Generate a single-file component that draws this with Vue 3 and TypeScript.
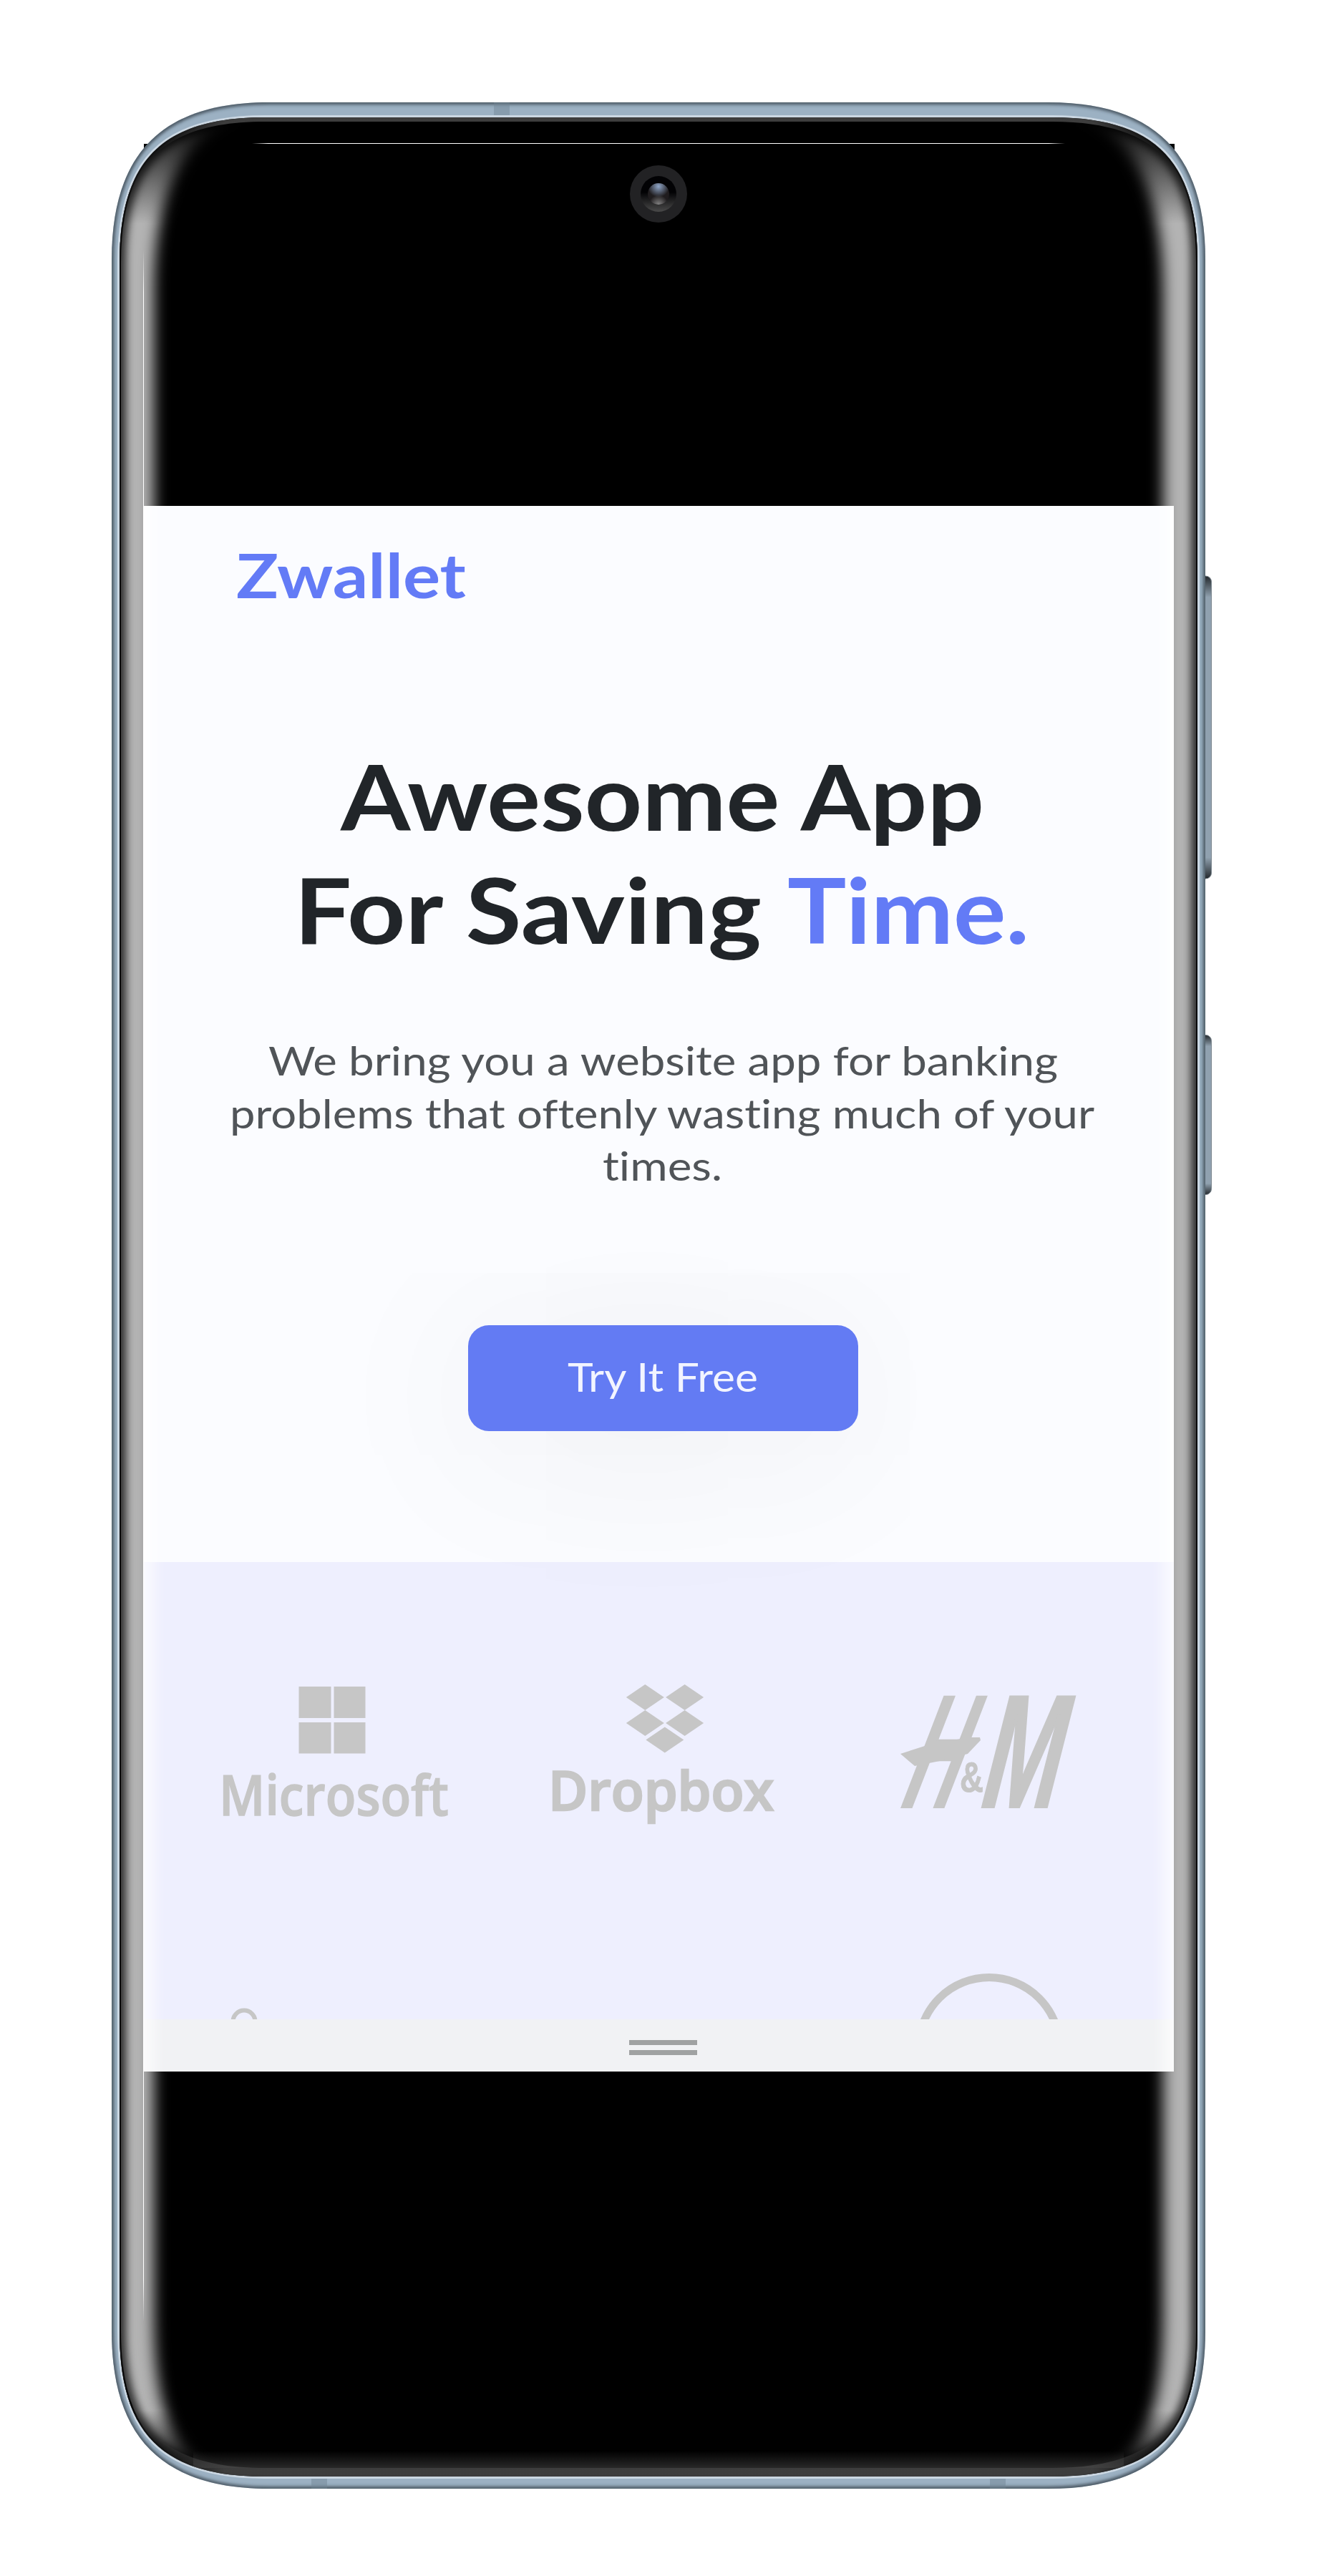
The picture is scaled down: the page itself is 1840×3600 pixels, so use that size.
<script setup lang="ts">
interface Line {
  text: string
  x: number
  y: number
  width: number
}

const intro: Line[] = [
  { text: 'We bring you a website app for banking', x: 174, y: 105, width: 1103 },
  { text: 'problems that oftenly wasting much of your', x: 120, y: 179, width: 1208 },
  { text: 'times.', x: 641, y: 252, width: 167 },
]

const outerEdge =
  'M376 143H1464C1613 143 1684 214 1684 363V3258C1684 3407 1613 3478 1464 3478H376C227 3478 156 3407 156 3258V363C156 214 227 143 376 143Z'
const innerEdge =
  'M370 164H1470C1613 164 1673 224 1673 367V3258C1673 3401 1613 3461 1470 3461H370C227 3461 167 3401 167 3258V367C167 224 227 164 370 164Z'
const glow =
  'M100 100H1740V3540H100Z M400 150H1440C1575 150 1625 250 1625 410V3230C1625 3400 1590 3475 1440 3475H400C250 3475 215 3400 215 3230V410C215 250 265 150 400 150Z'
</script>

<template>
  <main class="stage">
    <svg class="layer" viewBox="0 0 1840 3600" aria-hidden="true">
      <defs>
        <clipPath id="outer-clip"><path :d="outerEdge" /></clipPath>
        <filter id="rim-blur" filterUnits="userSpaceOnUse" x="100" y="100" width="1640" height="3420">
          <feGaussianBlur stdDeviation="2.5" />
        </filter>
        <linearGradient id="key" x1="0" y1="0" x2="0" y2="1">
          <stop offset="0" stop-color="#23282c" />
          <stop offset=".07" stop-color="#90a1af" />
          <stop offset=".93" stop-color="#90a1af" />
          <stop offset="1" stop-color="#23282c" />
        </linearGradient>
      </defs>
      <path d="M201 201h16v16h-16zM1625 201h16v16h-16z" />
      <g fill="url(#key)" stroke="#7d8890" stroke-width="1">
        <rect x="1676" y="805" width="16.500" height="423" rx="8" />
        <rect x="1676" y="1446.500" width="16.500" height="223" rx="8" />
      </g>
      <path :d="outerEdge" fill="#9cb1c3" />
      <g clip-path="url(#outer-clip)">
        <path :d="outerEdge" fill="none" stroke="#35404a" stroke-width="5" filter="url(#rim-blur)" />
        <g fill="#6f8393" opacity=".45">
          <rect x="690" y="143" width="22" height="21" />
          <rect x="435" y="3461" width="22" height="17" />
          <rect x="1383" y="3461" width="22" height="17" />
        </g>
      </g>
      <path :d="innerEdge" fill="#000" stroke="#cbd7e2" stroke-width="6" />
      <path :d="innerEdge" fill="#000" />
    </svg>

    <section class="app">
      <header class="brand">
        <svg width="1439" height="190">
          <text x="129" y="129" textLength="321" lengthAdjust="spacingAndGlyphs">Zwallet</text>
        </svg>
      </header>

      <div class="hero">
        <h1>
          <svg width="1439" height="501">
            <text x="275" y="264" textLength="899" lengthAdjust="spacingAndGlyphs">Awesome App</text>
            <text x="210" y="422" textLength="653" lengthAdjust="spacingAndGlyphs">For Saving</text>
            <text class="accent" x="899" y="422" textLength="338" lengthAdjust="spacingAndGlyphs">Time.</text>
          </svg>
        </h1>
        <p>
          <svg width="1439" height="454">
            <text
              v-for="line in intro"
              :key="line.text"
              :x="line.x"
              :y="line.y"
              :textLength="line.width"
              lengthAdjust="spacingAndGlyphs"
            >{{ line.text }}</text>
          </svg>
        </p>
        <button type="button">
          <svg width="545" height="148">
            <text x="139" y="93" textLength="266" lengthAdjust="spacingAndGlyphs">Try It Free</text>
          </svg>
        </button>
      </div>

      <div class="partners">
        <div class="row">
          <svg class="logo microsoft" viewBox="300 2340 340 220" width="340" height="220">
            <path d="M417.500 2357h45v44h-45zM466.500 2357h44v44h-44zM417.500 2407h45v43.500h-45zM466.500 2407h44v43.500h-44z" />
            <text x="306" y="2537" font-size="77" font-weight="600" textLength="321" lengthAdjust="spacingAndGlyphs">Microsoft</text>
          </svg>
          <svg class="logo dropbox" viewBox="760 2340 340 220" width="340" height="220">
            <path d="M901.300 2354l26.500 18-26.500 18-26.500-18zM956.600 2354l26.500 18-26.500 18-26.500-18zM901.300 2390l26.500 18-26.500 18-26.500-18zM956.600 2390l26.500 18-26.500 18-26.500-18zM928.800 2413.500l26.500 18-26.500 18-26.500-18z" />
            <text x="766" y="2529.500" font-size="76" font-weight="600" textLength="315" lengthAdjust="spacingAndGlyphs">Dropbox</text>
          </svg>
          <svg class="logo hm" viewBox="1240 2340 280 220" width="280" height="220">
            <text transform="translate(1258 2525) skewX(-16.5)" font-size="223" textLength="73" lengthAdjust="spacingAndGlyphs">H</text>
            <path d="M1258 2451L1292 2440L1352 2428L1369 2428L1370 2432L1352 2451L1318 2460L1278 2468Z" />
            <text class="amp" x="1341" y="2504" font-size="60" textLength="33" lengthAdjust="spacingAndGlyphs">&amp;</text>
            <text transform="translate(1370 2525) skewX(-8)" font-size="223" textLength="108" lengthAdjust="spacingAndGlyphs">M</text>
          </svg>
        </div>
        <div class="row clipped">
          <svg width="50" height="70" viewBox="316 2751 50 70">
            <circle cx="341" cy="2824" r="15.500" fill="none" stroke="#c6c6c6" stroke-width="6" />
          </svg>
          <svg width="220" height="70" viewBox="1273 2751 220 70">
            <circle cx="1382" cy="2861" r="98.500" fill="none" stroke="#c6c6c6" stroke-width="11" />
          </svg>
        </div>
      </div>

      <footer class="grip">
        <span></span>
        <span></span>
      </footer>
    </section>

    <svg class="layer" viewBox="0 0 1840 3600" aria-hidden="true">
      <defs>
        <clipPath id="inner-clip"><path :d="innerEdge" /></clipPath>
        <filter id="glow-blur" filterUnits="userSpaceOnUse" x="50" y="50" width="1740" height="3540">
          <feGaussianBlur stdDeviation="10" />
        </filter>
        <filter id="edge-blur" filterUnits="userSpaceOnUse" x="50" y="50" width="1740" height="3540">
          <feGaussianBlur stdDeviation="6" />
        </filter>
        <linearGradient id="fade" x1="0" y1="164" x2="0" y2="3461" gradientUnits="userSpaceOnUse">
          <stop offset="0" stop-color="#000" />
          <stop offset=".015" stop-color="#555" />
          <stop offset=".045" stop-color="#fff" />
          <stop offset=".972" stop-color="#fff" />
          <stop offset=".99" stop-color="#444" />
          <stop offset="1" stop-color="#000" />
        </linearGradient>
        <mask id="side-mask" maskUnits="userSpaceOnUse" x="0" y="0" width="1840" height="3600">
          <rect width="1840" height="3600" fill="url(#fade)" />
        </mask>
        <linearGradient id="chin" x1="0" y1="3425" x2="0" y2="3449" gradientUnits="userSpaceOnUse">
          <stop offset="0" stop-color="#fff" stop-opacity="0" />
          <stop offset="1" stop-color="#fff" stop-opacity=".16" />
        </linearGradient>
        <linearGradient id="band" x1="215" y1="0" x2="1625" y2="0" gradientUnits="userSpaceOnUse">
          <stop offset="0" stop-color="#444" stop-opacity="0" />
          <stop offset=".07" stop-color="#444" stop-opacity=".9" />
          <stop offset=".93" stop-color="#444" stop-opacity=".9" />
          <stop offset="1" stop-color="#444" stop-opacity="0" />
        </linearGradient>
        <linearGradient id="hairline-x" x1="352" y1="0" x2="1488" y2="0" gradientUnits="userSpaceOnUse">
          <stop offset="0" stop-color="#fff" stop-opacity="0" />
          <stop offset=".02" stop-color="#fff" />
          <stop offset=".98" stop-color="#fff" />
          <stop offset="1" stop-color="#fff" stop-opacity="0" />
        </linearGradient>
        <linearGradient id="hairline-y" x1="0" y1="350" x2="0" y2="3244" gradientUnits="userSpaceOnUse">
          <stop offset="0" stop-color="#fff" stop-opacity="0" />
          <stop offset=".02" stop-color="#fff" />
          <stop offset=".98" stop-color="#fff" />
          <stop offset="1" stop-color="#fff" stop-opacity="0" />
        </linearGradient>
        <linearGradient id="socket" x1="0" y1="0" x2="0" y2="1">
          <stop offset=".45" stop-color="#020204" />
          <stop offset="1" stop-color="#4a4a4a" />
        </linearGradient>
        <radialGradient id="sky" cx=".5" cy=".15" r=".5">
          <stop offset="0" stop-color="#8fa6c8" />
          <stop offset="1" stop-color="#8fa6c8" stop-opacity="0" />
        </radialGradient>
        <radialGradient id="floor" cx=".5" cy="1" r=".45">
          <stop offset="0" stop-color="#858585" />
          <stop offset="1" stop-color="#858585" stop-opacity="0" />
        </radialGradient>
      </defs>
      <g clip-path="url(#inner-clip)">
        <g mask="url(#side-mask)">
          <path :d="glow" fill="#fff" fill-opacity=".7" fill-rule="evenodd" filter="url(#glow-blur)" />
          <path :d="innerEdge" fill="none" stroke="#000" stroke-opacity=".75" stroke-width="18" filter="url(#edge-blur)" />
        </g>
        <path d="M270 3425H1570V3449H270Z" fill="url(#chin)" />
        <path
          d="M167 164H1673V3461H167ZM370 170H1470C1613 170 1673 230 1673 373V3246C1673 3389 1613 3449 1470 3449H370C227 3449 167 3389 167 3246V373C167 230 227 170 370 170Z"
          fill="url(#band)"
          fill-rule="evenodd"
        />
        <path :d="innerEdge" fill="none" stroke="#0a0a0a" stroke-width="4" mask="url(#side-mask)" />
      </g>
      <rect x="352" y="200" width="1136" height="1" fill="url(#hairline-x)" />
      <rect x="200" y="350" width="1" height="2894" fill="url(#hairline-y)" />
      <circle cx="920" cy="271" r="40" fill="#222224" />
      <circle cx="920" cy="271" r="25" fill="url(#socket)" />
      <circle cx="920" cy="271" r="15" fill="#1f1c1e" />
      <circle cx="920" cy="271" r="15" fill="url(#sky)" />
      <circle cx="920" cy="271" r="15" fill="url(#floor)" />
    </svg>
  </main>
</template>

<style>
body {
  margin: 0;
  background: #fff;
}
</style>

<style scoped>
.stage {
  position: relative;
  box-sizing: border-box;
  width: 1840px;
  height: 3600px;
  padding: 707px 200px 0 201px;
  overflow: hidden;
}

.layer {
  position: absolute;
  inset: 0;
  width: 1840px;
  height: 3600px;
  pointer-events: none;
}

.app {
  position: relative;
  width: 1439px;
  height: 2188px;
  display: flex;
  flex-direction: column;
  overflow: hidden;
  background: #fbfcff;
  font-family: Lato, "Open Sans", sans-serif;
  font-variant-ligatures: none;
}

svg {
  display: block;
}

.brand {
  height: 190px;
  fill: #637bf6;
  font-size: 86px;
  font-weight: 700;
}

.hero {
  height: 1286px;
  display: flex;
  flex-direction: column;
}

h1,
p {
  margin: 0;
}

h1 {
  fill: #212529;
  font-size: 127px;
  font-weight: 700;
}

.accent {
  fill: #637bf6;
}

p {
  fill: #505458;
  font-size: 56px;
}

button {
  position: relative;
  z-index: 1;
  margin-left: 453px;
  width: 545px;
  height: 148px;
  flex: none;
  padding: 0;
  border: 0;
  border-radius: 29px;
  background: #637bf3;
  box-shadow: 0 24px 260px rgba(0, 0, 0, 0.07);
  fill: #f2f4ff;
  font: 400 56px Lato, "Open Sans", sans-serif;
}

.partners {
  flex: 1;
  display: flex;
  flex-direction: column;
  justify-content: space-between;
  overflow: hidden;
  background: #eeeffe;
}

.row {
  display: flex;
  padding: 157px 0 0 99px;
}

.row.clipped {
  padding: 0 147px 0 115px;
  justify-content: space-between;
}

.logo {
  overflow: visible;
  flex: none;
  fill: #c6c6c6;
  font-family: "Open Sans", "Noto Sans", sans-serif;
}

.logo text {
  stroke: #c6c6c6;
  stroke-width: 1.5px;
}

.dropbox {
  margin-left: 120px;
}

.dropbox text {
  stroke-width: 2.5px;
}

.hm {
  margin-left: 140px;
  font-family: "Liberation Sans", sans-serif;
  font-weight: 700;
  font-style: italic;
}

.hm text {
  stroke-width: 4px;
}

.hm .amp {
  font-style: normal;
  stroke-width: 1px;
}

.grip {
  height: 73px;
  flex: none;
  display: flex;
  flex-direction: column;
  align-items: center;
  justify-content: center;
  gap: 7px;
  background: #f1f2f4;
  padding: 6px 0 0 12px;
  box-sizing: border-box;
}

.grip span {
  width: 95px;
  height: 7px;
  background: #a0a2a2;
}
</style>
